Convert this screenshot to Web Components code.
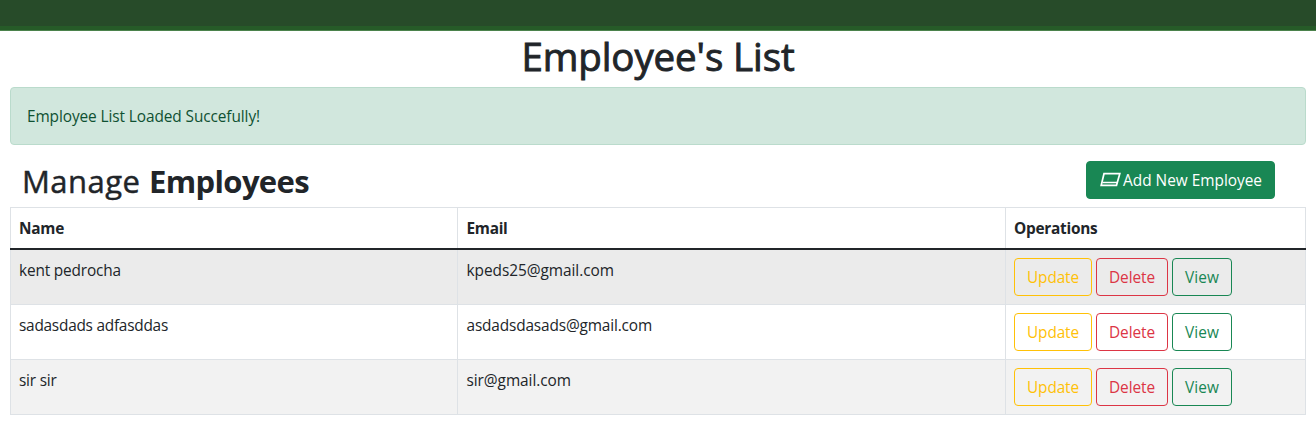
<!DOCTYPE html>
<html lang="en">
<head>
<meta charset="utf-8">
<title>Employee's List</title>
<style>
body{margin:0;background:#fff;color:#212529;font:400 15.4px/24px "Open Sans","Noto Sans",sans-serif;--shift:1px}
</style>
</head>
<body>
<employee-page></employee-page>
<script>
// One line of text whose tracking is adjusted to a given advance width.
class FitText extends HTMLElement{
  connectedCallback(){
    const root=this.attachShadow({mode:'open'});
    root.innerHTML='<style>:host{display:inline-block;white-space:pre;text-align:left}span{display:inline-block;position:relative;top:var(--shift,0)}</style><span><slot></slot></span>';
    const w=parseFloat(this.getAttribute('w'));
    const s=root.querySelector('span');
    const n=this.textContent.length;
    s.style.letterSpacing=((w-s.getBoundingClientRect().width)/n)+'px';
    this.style.width=w+'px';
  }
}
class TopBar extends HTMLElement{
  constructor(){super();this.attachShadow({mode:'open'}).innerHTML=`<style>
  :host{display:block}
  div{height:26px;background:#274b29;border-bottom:4px solid #265b28}
  p{margin:0;height:1px;background:#4b824c}</style><div></div><p></p>`}
}
class AlertBox extends HTMLElement{
  constructor(){super();this.attachShadow({mode:'open'}).innerHTML=`<style>
  :host{display:block;box-sizing:border-box;height:58px;padding:16px;border:1px solid #badbcc;border-radius:4px;background:#d1e7dd;color:#0f5132}</style><slot></slot>`}
}
class UiButton extends HTMLElement{
  constructor(){super();this.attachShadow({mode:'open'}).innerHTML=`<style>
  :host{display:block}
  button{display:flex;align-items:center;box-sizing:border-box;height:38px;padding:0 12px;margin:0;font:inherit;border:1px solid currentColor;border-radius:4px;background:transparent;color:#198754}
  :host([kind=warning]) button{color:#ffc107}
  :host([kind=danger]) button{color:#dc3545}
  :host([kind=solid]) button{background:#198754;border-color:#198754;color:#fff}
  </style><button><slot></slot></button>`}
}
class BoxIcon extends HTMLElement{
  constructor(){super();this.attachShadow({mode:'open'}).innerHTML=`<style>
  :host{display:block;width:24px;height:16px}svg{display:block}</style>
  <svg width="24" height="16" viewBox="0 0 24 16" fill="none" stroke="#fff"><path d="M5 1.700H20.800L17.500 13.300H2.200Z" stroke-width="1.7"/><path d="M3.400 10.500H18.400" stroke-width="1.500"/></svg>`}
}
class EmployeeTable extends HTMLElement{
  constructor(){
    super();
    const rows=[
      ['kent pedrocha',102,'kpeds25@gmail.com',147.5],
      ['sadasdads adfasddas',149,'asdadsdasads@gmail.com',185.5],
      ['sir sir',37.5,'sir@gmail.com',104.5]];
    const ops='<div class="ops"><ui-button kind="warning"><fit-text w="52">Update</fit-text></ui-button><ui-button kind="danger"><fit-text w="46">Delete</fit-text></ui-button><ui-button><fit-text w="34">View</fit-text></ui-button></div>';
    this.attachShadow({mode:'open'}).innerHTML=`<style>
    :host{display:block;border:1px solid #dee2e6;border-bottom:0}
    .row{display:grid;grid-template-columns:447px 548px 1fr;height:54px;border-bottom:1px solid #dee2e6}
    .row>div{padding:8px;border-right:1px solid #dee2e6}
    .row>div:last-child{border-right:0}
    .row>div:nth-child(2){padding-left:8.5px}
    .head{height:40px;font-weight:700;border-bottom:2px solid #212529;margin:0 -1px;padding:0 1px}
    .hover{background:#ebebeb}.odd{background:#f2f2f2}
    .row .ops{display:flex;gap:4px}
    </style>
    <div class="row head"><div><fit-text w="45">Name</fit-text></div><div><fit-text w="41">Email</fit-text></div><div><fit-text w="83.500">Operations</fit-text></div></div>
    ${rows.map((r,i)=>`<div class="row ${['hover','','odd'][i]}"><div><fit-text w="${r[1]}">${r[0]}</fit-text></div><div><fit-text w="${r[3]}">${r[2]}</fit-text></div><div>${ops}</div></div>`).join('')}`;
  }
}
class EmployeePage extends HTMLElement{
  constructor(){super();this.attachShadow({mode:'open'}).innerHTML=`<style>
  :host{display:block}
  main{padding:0 10px}
  h1{margin:0 0 8px;text-align:center;font-weight:500;font-size:38.5px;line-height:48px;height:48px;-webkit-text-stroke:.9px currentColor}
  .title{display:flex;justify-content:space-between;align-items:flex-start;height:46px;padding:16px 31px 0 12px}
  h2{margin:1px 0 0;font-weight:400;font-size:31px;line-height:38px;height:38px;white-space:nowrap;display:flex;--shift:0px;-webkit-text-stroke:.45px currentColor}
  h2 b{font-weight:700;-webkit-text-stroke:0}
  </style>
  <top-bar></top-bar>
  <main>
  <h1><fit-text w="273">Employee's List</fit-text></h1>
  <alert-box><fit-text w="233">Employee List Loaded Succefully!</fit-text></alert-box>
  <div class="title"><h2><fit-text w="127">Manage </fit-text><b><fit-text w="160">Employees</fit-text></b></h2>
  <ui-button kind="solid"><box-icon></box-icon><fit-text w="139">Add New Employee</fit-text></ui-button></div>
  <employee-table></employee-table>
  </main>`}
}
customElements.define('fit-text',FitText);
customElements.define('top-bar',TopBar);
customElements.define('alert-box',AlertBox);
customElements.define('box-icon',BoxIcon);
customElements.define('ui-button',UiButton);
customElements.define('employee-table',EmployeeTable);
customElements.define('employee-page',EmployeePage);
</script>
</body>
</html>
